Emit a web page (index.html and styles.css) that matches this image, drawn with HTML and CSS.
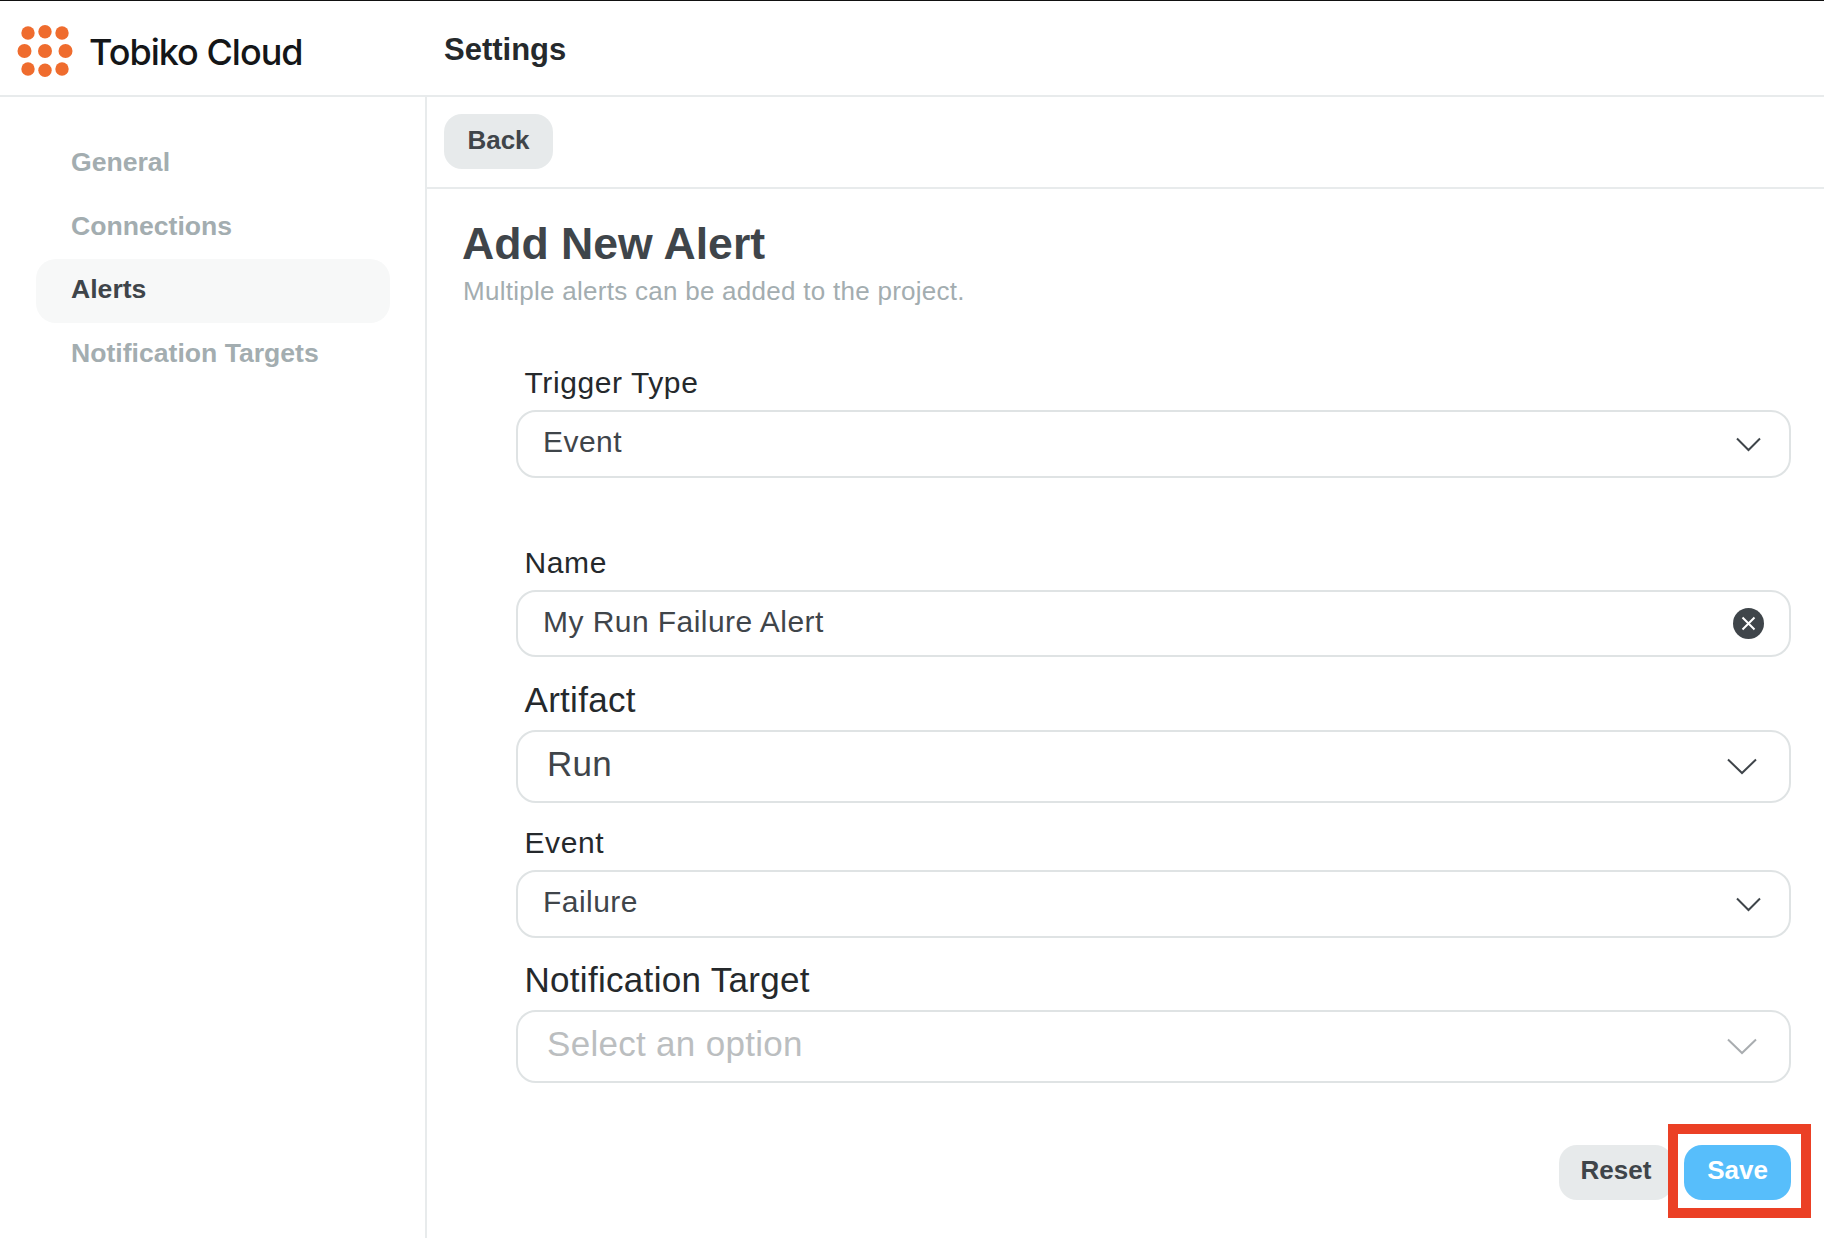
FILE: index.html
```html
<!DOCTYPE html>
<html lang="en">
<head>
  <meta charset="UTF-8">
  <title>Tobiko Cloud - Settings</title>
  <link rel="stylesheet" href="styles.css">
</head>
<body>

<header class="topbar">
  <div class="brand">
    <svg class="brand-logo" width="56" height="54" viewBox="0 0 56 54" aria-hidden="true">
      <g fill="#ef6c2e">
        <circle cx="11" cy="8" r="6.7"/><circle cx="28" cy="6.7" r="6.7"/><circle cx="45" cy="8" r="6.7"/>
        <circle cx="7.5" cy="26" r="7"/><circle cx="28" cy="26" r="7"/><circle cx="48.5" cy="26" r="7"/>
        <circle cx="11" cy="44" r="6.7"/><circle cx="28" cy="45.3" r="6.7"/><circle cx="45" cy="44" r="6.7"/>
      </g>
    </svg>
    <span class="brand-name">Tobiko Cloud</span>
  </div>
  <h2 class="page-name">Settings</h2>
</header>

<div class="main-layout">
  <!-- left nav -->
  <nav class="sidebar">
    <a class="nav-item">General</a>
    <a class="nav-item">Connections</a>
    <a class="nav-item active">Alerts</a>
    <a class="nav-item">Notification Targets</a>
  </nav>

  <main class="content">
    <div class="back-bar">
      <button class="btn btn-grey btn-back">Back</button>
    </div>

    <div class="form-area">
      <h1 class="form-title">Add New Alert</h1>
      <p class="form-sub">Multiple alerts can be added to the project.</p>

      <div class="field field-first">
        <label class="field-label">Trigger Type</label>
        <div class="field-box">
          <span>Event</span>
          <svg class="chevron" width="25" height="15" viewBox="0 0 25 15"><path d="M1 1.5 12.5 13 24 1.5"/></svg>
        </div>
      </div>

      <div class="field">
        <label class="field-label">Name</label>
        <div class="field-box">
          <span>My Run Failure Alert</span>
          <svg class="clear" width="31" height="31" viewBox="0 0 31 31">
            <circle cx="15.5" cy="15.5" r="15.5" fill="#3f454a"/>
            <path d="M9.5 9.5l12 12M21.5 9.5l-12 12" stroke="#fff" stroke-width="2" fill="none"/>
          </svg>
        </div>
      </div>

      <div class="field field-large">
        <label class="field-label">Artifact</label>
        <div class="field-box">
          <span>Run</span>
          <svg class="chevron" width="30" height="17" viewBox="0 0 30 17"><path d="M1 1.5 15 15 29 1.5"/></svg>
        </div>
      </div>

      <div class="field field-event">
        <label class="field-label">Event</label>
        <div class="field-box">
          <span>Failure</span>
          <svg class="chevron" width="25" height="15" viewBox="0 0 25 15"><path d="M1 1.5 12.5 13 24 1.5"/></svg>
        </div>
      </div>

      <div class="field field-large">
        <label class="field-label">Notification Target</label>
        <div class="field-box field-empty">
          <span>Select an option</span>
          <svg class="chevron" width="30" height="17" viewBox="0 0 30 17"><path d="M1 1.5 15 15 29 1.5"/></svg>
        </div>
      </div>

      <div class="form-actions">
        <button class="btn btn-grey btn-reset">Reset</button>
        <button class="btn btn-blue">Save</button>
        <!-- red box drawn over the screenshot -->
        <div class="highlight"></div>
      </div>
    </div>
  </main>
</div>

</body>
</html>
```

FILE: styles.css
```css
* {
  box-sizing: border-box;
}
html, body {
  margin: 0;
  height: 100%;
  overflow: hidden;
}
body {
  font-family: "Liberation Sans", Arial, sans-serif;
  color: #3f454a;
  background: #fff;
  border-top: 1px solid #111;
}
/* top bar */
.topbar {
  display: flex;
  align-items: center;
  height: 96px;
  border-bottom: 2px solid #e8ebec;
}
.brand {
  display: flex;
  align-items: center;
  gap: 16px;
  width: 444px;
  padding: 8px 0 0 17px;
}
.brand-name {
  font-family: Inter, "Liberation Sans", sans-serif;
  font-size: 36px;
  font-weight: 500;
  letter-spacing: -1px;
  color: #141618;
}
.page-name {
  margin: 4px 0 0;
  font-size: 31px;
  font-weight: 700;
  color: #25292c;
}
.main-layout {
  display: flex;
  height: calc(100% - 96px);
}
/* left nav */
.sidebar {
  width: 427px;
  flex: none;
  padding: 35px 35px 0 36px;
  border-right: 2px solid #e8ebec;
}
.nav-item {
  display: block;
  height: 64px;
  margin-bottom: -0.5px;
  padding-left: 35px;
  border-radius: 20px;
  font-size: 26.6px;
  font-weight: 700;
  line-height: 60px;
  color: #a3adb0;
}
.nav-item.active {
  background: #f7f8f8;
  color: #3f454a;
}
.content {
  flex: 1;
  min-width: 0;
}
.back-bar {
  height: 92px;
  padding: 17px 17px 0;
  border-bottom: 2px solid #e8ebec;
}
/* buttons */
.btn {
  height: 55px;
  border: none;
  border-radius: 18px;
  font-family: inherit;
  font-size: 26px;
  font-weight: 700;
  padding: 0 0 4px;
}
.btn-grey {
  background: #e7eaeb;
  color: #3f454a;
}
.btn-blue {
  background: #57befb;
  color: #fff;
}
.btn-back {
  width: 109px;
  padding-bottom: 2px;
}
/* form */
.form-area {
  padding: 30px 33px 0 36px;
}
.form-title {
  margin: 0 0 0 -1px;
  font-size: 44.6px;
  line-height: 50px;
  font-weight: 700;
  color: #3f454a;
}
.form-sub {
  margin: 6px 0 0;
  font-size: 26px;
  letter-spacing: 0.27px;
  line-height: 32px;
  color: #a3adb0;
}
.field {
  margin: 0 0 21px 53px;
}
.field-first {
  margin-top: 56px;
  margin-bottom: 65px;
}
.field-first .field-box {
  height: 68px;
}
.field-event {
  margin-bottom: 20px;
}
.field-event .field-box {
  height: 68px;
}
.field-label {
  display: block;
  margin: 0 0 7px 8.5px;
  font-size: 30px;
  letter-spacing: 0.6px;
  line-height: 40px;
  color: #25292c;
}
.field-box {
  display: flex;
  align-items: center;
  justify-content: space-between;
  height: 67px;
  padding: 0 28px 0 25px;
  border: 2px solid #dfe3e4;
  border-radius: 20px;
  font-size: 30px;
  letter-spacing: 0.45px;
}
.field-box span {
  padding-bottom: 4px;
}
.field-large {
  margin-bottom: 20px;
}
.field-large .field-label {
  margin-bottom: 8px;
  font-size: 35px;
  letter-spacing: 0.3px;
  line-height: 44px;
}
.field-large .field-box {
  height: 73px;
  padding: 0 32px 0 25px;
  font-size: 35px;
  letter-spacing: 0.3px;
}
.field-large .field-box span {
  padding: 0 0 5px 4px;
}
.field-empty {
  color: #bbbec0;
}
.chevron {
  flex: none;
  fill: none;
  stroke: #3f454a;
  stroke-width: 2;
}
.field-empty .chevron {
  stroke: #a9adb0;
}
.clear {
  flex: none;
  margin-right: -3px;
}
.form-actions {
  position: relative;
  display: flex;
  justify-content: flex-end;
  gap: 12px;
  margin-top: 62px;
}
.btn-reset {
  width: 114px;
  margin-right: -1px;
}
.btn-blue {
  width: 107px;
}
.highlight {
  position: absolute;
  top: -21px;
  right: -20px;
  width: 143px;
  height: 94px;
  border: 10px solid #eb4025;
  pointer-events: none;
}
```
